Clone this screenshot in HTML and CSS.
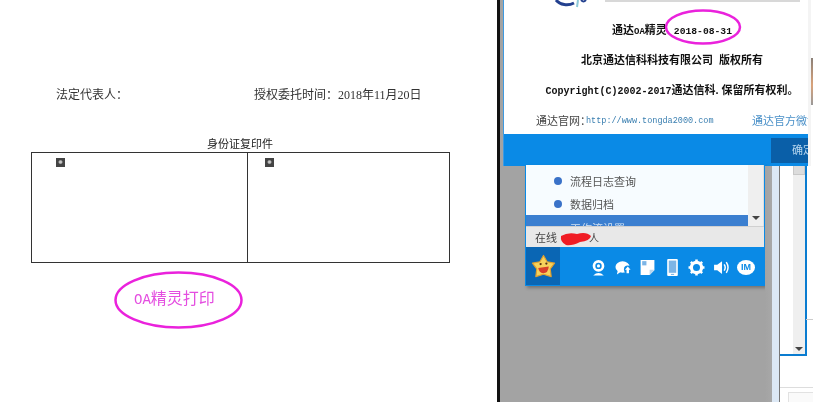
FILE: index.html
```html
<!DOCTYPE html>
<html lang="zh-CN">
<head>
    <meta charset="utf-8">
    <title>通达OA精灵</title>
    <link rel="stylesheet" href="styles.css">
</head>
<body>
    <div class="screen">
        <div class="doc">
            <div class="sign-row">
                <span class="sign-name">法定代表人：</span>
                <span class="sign-time">授权委托时间：<span class="sign-date">2018年11月20日</span></span>
            </div>
            <div class="id-title">身份证复印件</div>
            <div class="id-table">
                <div class="id-cell"><span class="broken-img"></span></div>
                <div class="id-cell"><span class="broken-img"></span></div>
            </div>
            <div class="print-note"><span class="note-latin">OA</span>精灵打印</div>
        </div>

        <div class="desktop">
            <!-- about dialog, runs past the edge of the shot -->
            <div class="about">
                <div class="about-body">
                    <div class="about-head">
                        <svg class="about-logo" viewBox="0 0 34 8">
                            <path d="M2 0 C6 5 14 6 20 3" fill="none" stroke="#23408f" stroke-width="3"/>
                            <path d="M24 0 L23 7" stroke="#8fc9d8" stroke-width="2"/>
                            <path d="M27 0 C29 2 30 2 32 0" fill="none" stroke="#23408f" stroke-width="2"/>
                        </svg>
                        <span class="about-slogan"></span>
                    </div>
                    <div class="about-line line-version">通达<span class="mono-oa">OA</span>精灵<span class="mono-date">2018-08-31</span></div>
                    <div class="about-line line-company">北京通达信科科技有限公司&nbsp;&nbsp;版权所有</div>
                    <div class="about-line line-copy"><span class="mono-copy">Copyright(C)2002-2017</span>通达信科. 保留所有权利。</div>
                    <div class="about-links">
                        <span class="site-label">通达官网：</span>
                        <span class="site-url">http://www.tongda2000.com</span>
                        <span class="site-weibo">通达官方微博</span>
                    </div>
                </div>
                <div class="about-foot">
                    <div class="ok-btn">确定</div>
                </div>
            </div>

            <!-- OA client window -->
            <div class="client">
                <div class="client-list">
                    <div class="list-items">
                        <div class="list-row"><span class="dot"></span>流程日志查询</div>
                        <div class="list-row"><span class="dot"></span>数据归档</div>
                        <div class="list-row row-active">工作流设置</div>
                    </div>
                    <div class="list-scroll"><span class="arrow-down"></span></div>
                </div>
                <div class="client-status">在线<span class="scribble"></span><span class="status-tail">人</span></div>
                <div class="client-bar">
                    <div class="star-box">
                        <svg class="star" viewBox="0 0 26 26">
                            <path d="M13 1.500 L16.800 8 L24.500 9.500 L20 15.500 L21 23.500 L13 21 L5 23.500 L6 15.500 L1.500 9.500 L9.200 8 Z" fill="#f6d25c" stroke="#e0a030" stroke-width="1.200" stroke-linejoin="round"/>
                            <circle cx="10" cy="10.500" r="1.200" fill="#5a3210"/>
                            <circle cx="16" cy="10" r="1.200" fill="#5a3210"/>
                            <path d="M7.500 14.500 Q13 14 18.500 13 Q18 20 12.500 20 Q8.500 19.500 7.500 14.500 Z" fill="#d8402a"/>
                        </svg>
                    </div>
                    <div class="bar-icons">
                        <svg class="bar-icon" viewBox="0 0 16 16">
                            <circle cx="8" cy="6.500" r="5.500" fill="#fff"/>
                            <circle cx="8" cy="6.500" r="3" fill="#0a8ae6"/>
                            <circle cx="8" cy="6.500" r="1.500" fill="#fff"/>
                            <path d="M3 15.500 Q8 11 13 15.500 Z" fill="#fff"/>
                        </svg>
                        <svg class="bar-icon" viewBox="0 0 18 16">
                            <ellipse cx="8" cy="7.500" rx="7.500" ry="6" fill="#fff"/>
                            <path d="M3 11 L2 15.500 L7 12 Z" fill="#fff"/>
                            <circle cx="13.500" cy="10" r="4" fill="#0a8ae6"/>
                            <path d="M13.500 7 L16.500 10.500 L14.800 10.500 L14.800 14 L12.200 14 L12.200 10.500 L10.500 10.500 Z" fill="#fff"/>
                        </svg>
                        <svg class="bar-icon" viewBox="0 0 16 16">
                            <path d="M1.500 1 H14.500 V10.500 L10 15 H1.500 Z" fill="#fff"/>
                            <path d="M3 2 H7 V6 H3 Z" fill="#7db5e6"/>
                            <path d="M10 15 L10 10 L14.500 10 Z" fill="#b9d6ee"/>
                        </svg>
                        <svg class="bar-icon" viewBox="0 0 16 16">
                            <rect x="3" y="0" width="10" height="16" rx="1" fill="#fff"/>
                            <rect x="4.500" y="1.500" width="7" height="11.500" fill="#7db5e6"/>
                            <rect x="6.500" y="14" width="3" height="1" fill="#7db5e6"/>
                        </svg>
                        <svg class="bar-icon" viewBox="0 0 16 16">
                            <circle cx="8" cy="8" r="4.800" fill="none" stroke="#fff" stroke-width="3"/>
                            <path d="M8 0.500 V3 M8 13 V15.500 M0.500 8 H3 M13 8 H15.500 M2.700 2.700 L4.500 4.500 M11.500 11.500 L13.300 13.300 M2.700 13.300 L4.500 11.500 M11.500 4.500 L13.300 2.700" stroke="#fff" stroke-width="2.400"/>
                        </svg>
                        <svg class="bar-icon" viewBox="0 0 16 16">
                            <path d="M1 5.500 H4 L8.500 2 V14 L4 10.500 H1 Z" fill="#fff"/>
                            <path d="M10.500 5 Q12.500 8 10.500 11 M12.500 3 Q15.800 8 12.500 13" fill="none" stroke="#fff" stroke-width="1.400"/>
                        </svg>
                        <span class="im-icon">IM</span>
                    </div>
                </div>
            </div>

            <!-- window behind the client, on the right -->
            <div class="back-win">
                <div class="back-edge"></div>
                <div class="back-main">
                    <div class="back-top">
                        <div class="back-pad"></div>
                        <div class="back-scroll">
                            <span class="back-thumb"></span>
                            <span class="arrow-down"></span>
                        </div>
                    </div>
                    <div class="back-bottom"></div>
                    <div class="back-box"></div>
                </div>
            </div>
            <div class="side-tick"></div>
            <div class="side-strip"></div>
        </div>

        <!-- hand drawn circles on top of the shot -->
        <svg class="marks" viewBox="0 0 813 402">
            <ellipse cx="703" cy="27" rx="37" ry="16.500"/>
            <ellipse cx="178.500" cy="300" rx="63" ry="27.500"/>
            <path class="red-mark" d="M561 236 Q568 232 577 234 Q586 231 591 236 Q590 241 580 242 Q572 246 566 245 Q560 242 561 236 Z"/>
        </svg>
    </div>
</body>
</html>
```

FILE: styles.css
```css
* {
    box-sizing: border-box;
}
html, body {
    margin: 0;
    padding: 0;
}
body {
    width: 813px;
    height: 402px;
    overflow: hidden;
    background: #fff;
    font-family: "Liberation Sans", "Noto Sans CJK SC", sans-serif;
}
.screen {
    position: relative;
    display: flex;
    width: 813px;
    height: 402px;
    overflow: hidden;
    filter: blur(0.4px);
}

/* left side, the printed page */
.doc {
    width: 500px;
    height: 402px;
    padding: 87px 0 0 31px;
    background: #fff;
    border-right: 3px solid #111;
    color: #333;
}
.sign-row {
    display: flex;
    height: 16px;
    font-size: 12px;
    line-height: 16px;
}
.sign-name {
    width: 223px;
    padding-left: 25px;
}
.sign-date {
    font-family: "Liberation Serif", "Noto Sans CJK SC", serif;
    font-size: 12px;
}
.id-title {
    width: 418px;
    margin-top: 34px;
    font-size: 11px;
    line-height: 15px;
    text-align: center;
    color: #222;
}
.id-table {
    display: grid;
    grid-template-columns: 215px 1fr;
    width: 419px;
    height: 111px;
    border: 1px solid #333;
}
.id-cell {
    padding: 5px 0 0 24px;
}
.id-cell + .id-cell {
    padding-left: 17px;
    border-left: 1px solid #333;
}
.broken-img {
    display: block;
    width: 9px;
    height: 9px;
    background: radial-gradient(circle at 50% 45%, #c8c8c8 1px, #444 2.500px);
}
.print-note {
    margin: 24px 0 0 103px;
    font-family: "Noto Sans CJK SC", sans-serif;
    font-size: 16px;
    line-height: 20px;
    color: #e44ee0;
}
.note-latin {
    font-family: "Liberation Mono", monospace;
    font-size: 14px;
}

/* right side */
.desktop {
    position: relative;
    flex: 1;
    height: 402px;
    background: #a3a3a3;
}
.about {
    position: absolute;
    left: 3px;
    top: 0;
    width: 338px;
    height: 166px;
    display: flex;
    flex-direction: column;
    background: #fff;
    border-left: 1px solid #3f9ae0;
}
.about-body {
    flex: 1;
    color: #111;
}
.about-head {
    position: relative;
    display: flex;
    height: 20px;
}
.about-logo {
    width: 34px;
    height: 8px;
    margin-left: 50px;
}
.about-slogan {
    display: block;
    width: 195px;
    height: 2px;
    margin-left: 17px;
    background: #d8d8d8;
}
.about-line {
    width: 336px;
    text-align: center;
    font-weight: bold;
    font-size: 11px;
    white-space: nowrap;
}
.line-version {
    height: 20px;
    line-height: 20px;
}
.mono-oa {
    font-family: "Liberation Mono", monospace;
    font-size: 9px;
}
.mono-date {
    margin-left: 7px;
    font-family: "Liberation Mono", monospace;
    font-size: 9.700px;
}
.line-company {
    height: 20px;
    margin-top: 10px;
    line-height: 20px;
}
.line-copy {
    height: 20px;
    margin-top: 10px;
    line-height: 20px;
}
.mono-copy {
    font-family: "Liberation Mono", monospace;
    font-size: 10px;
}
.about-links {
    display: flex;
    align-items: center;
    height: 20px;
    margin-top: 10px;
    padding-left: 32px;
    white-space: nowrap;
}
.site-label {
    width: 50px;
    margin-bottom: 1px;
    font-size: 11px;
    color: #444;
}
.site-url {
    width: 166px;
    padding-top: 1px;
    font-family: "Liberation Mono", monospace;
    font-size: 8.500px;
    color: #3a7fb0;
}
.site-weibo {
    font-size: 11px;
    color: #4a90c8;
}
.about-foot {
    display: flex;
    justify-content: flex-end;
    align-items: center;
    height: 32px;
    padding-right: 6px;
    background: #0a8ae6;
}
.ok-btn {
    width: 64px;
    height: 25px;
    background: #0a5fa8;
    color: #b7d6ee;
    font-size: 11px;
    line-height: 25px;
    text-align: center;
}

/* client window */
.client {
    position: absolute;
    left: 25px;
    top: 165px;
    width: 240px;
    height: 121px;
    display: flex;
    flex-direction: column;
    border: 1px solid #0a8ae6;
    border-top: 0;
    box-shadow: 2px 2px 3px rgba(60, 60, 60, 0.45);
}
.client-list {
    display: flex;
    height: 61px;
    background: #f7fcff;
}
.list-items {
    flex: 1;
    overflow: hidden;
    font-size: 11px;
    color: #555;
}
.list-row {
    display: flex;
    align-items: center;
    height: 23px;
    padding-left: 28px;
}
.list-row:first-child {
    margin-top: 4px;
}
.dot {
    width: 8px;
    height: 8px;
    margin-right: 8px;
    border-radius: 50%;
    background: #3a72c8;
}
.row-active {
    height: 15px;
    padding-left: 44px;
    padding-top: 5px;
    align-items: flex-start;
    background: #3b7fd0;
    color: #cfe0f2;
}
.list-scroll {
    display: flex;
    justify-content: center;
    align-items: flex-end;
    width: 16px;
    padding-bottom: 6px;
    background: #efefef;
    border-right: 1px solid #ddd;
}
.arrow-down {
    width: 0;
    height: 0;
    border-left: 4px solid transparent;
    border-right: 4px solid transparent;
    border-top: 4px solid #444;
}
.client-status {
    display: flex;
    align-items: center;
    height: 21px;
    padding-left: 9px;
    background: #e8e8e8;
    border-top: 1px solid #d0d0d0;
    font-size: 11px;
    color: #444;
}
.scribble {
    width: 32px;
}
.status-tail {
    font-size: 10px;
}
.client-bar {
    display: flex;
    flex: 1;
    background: #0a8ae6;
}
.star-box {
    display: flex;
    align-items: center;
    justify-content: center;
    width: 34px;
    background: #0a66b4;
}
.star {
    width: 25px;
    height: 25px;
}
.bar-icons {
    display: flex;
    align-items: center;
    gap: 7.500px;
    margin-left: 30px;
    padding-top: 3px;
}
.bar-icon {
    width: 17px;
    height: 17px;
}
.im-icon {
    width: 18px;
    height: 15px;
    border-radius: 50%;
    background: #fff;
    color: #0a8ae6;
    font-size: 9px;
    font-weight: bold;
    line-height: 15px;
    text-align: center;
}

/* window behind the client */
.back-win {
    position: absolute;
    left: 265px;
    top: 166px;
    width: 48px;
    height: 236px;
    display: flex;
}
.back-edge {
    width: 15px;
    background: linear-gradient(to right, #a3a3a3 0, #a8a8a8 7px, #dce8f5 7px, #dce8f5 14px, #777 14px);
}
.back-main {
    flex: 1;
    background: #fff;
}
.back-top {
    display: flex;
    height: 190px;
    border-right: 2px solid #0a7cd0;
    border-bottom: 2px solid #0a7cd0;
    margin-right: 6px;
}
.back-pad {
    width: 13px;
    background: #fff;
}
.back-scroll {
    display: flex;
    flex-direction: column;
    align-items: center;
    justify-content: space-between;
    flex: 1;
    padding-bottom: 3px;
    background: #efefef;
}
.back-thumb {
    width: 100%;
    height: 9px;
    background: #dcdcdc;
    border: 1px solid #c8c8c8;
    border-top: 0;
}
.back-bottom {
    height: 32px;
    border-bottom: 1px solid #ddd;
}
.back-box {
    height: 12px;
    margin: 4px 0 0 8px;
    background: #fafafa;
    border: 1px solid #e2e2e2;
    border-right: 0;
}
.side-tick {
    position: absolute;
    left: 306px;
    top: 319px;
    width: 7px;
    height: 1px;
    background: #ccc;
}
.side-strip {
    position: absolute;
    left: 308px;
    top: 0;
    width: 5px;
    height: 166px;
    background: linear-gradient(to bottom, #fff 58px, #8a8078 58px, #d9a27a 85px, #999 105px, #fff 105px);
    border-left: 3px solid #f4f4f4;
}

/* marks */
.marks {
    position: absolute;
    left: 0;
    top: 0;
    width: 813px;
    height: 402px;
}
.marks ellipse {
    fill: none;
    stroke: #ea22dc;
    stroke-width: 2.500;
}
.marks .red-mark {
    fill: #f01c24;
}
```
